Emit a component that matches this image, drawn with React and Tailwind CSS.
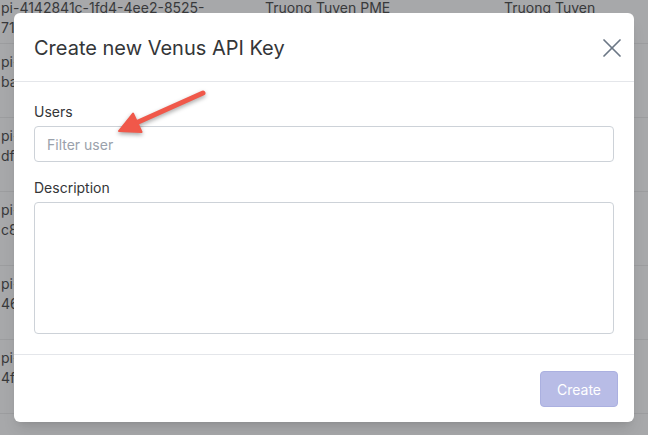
import React from "react";
import { X } from "lucide-react";

// only the slivers left of the modal are visible, keep them short
const rows = [
  { a: "pi-4142841c-1fd4-4ee2-8525-", b: "71f", user: "Truong Tuyen PME", owner: "Truong Tuyen" },
  { a: "pi-", b: "ba0", user: "", owner: "" },
  { a: "pi-", b: "df5", user: "", owner: "" },
  { a: "pi-", b: "c8b", user: "", owner: "" },
  { a: "pi-", b: "461", user: "", owner: "" },
  { a: "pi-", b: "4f9", user: "", owner: "" },
];

const Arrow = () => (
  <svg
    className="absolute left-0 top-0 pointer-events-none"
    width="648"
    height="435"
    style={{ filter: "drop-shadow(0px 2px 2px rgba(0,0,0,0.35))" }}
  >
    <line x1="203" y1="93" x2="136" y2="123" stroke="#f0584a" strokeWidth="5" strokeLinecap="round" />
    <polygon points="119,131 133,113.5 141.5,132" fill="#f0584a" stroke="#f0584a" strokeWidth="2" strokeLinejoin="round" />
  </svg>
);

export default function App() {
  return (
    <div
      className="relative w-[648px] h-[435px] overflow-hidden bg-[#a7a8aa] text-[14px] text-[#38393b]"
      style={{ fontFamily: "Inter, 'Noto Sans', sans-serif" }}
    >
      {/* table behind the dimmed backdrop */}
      <div className="flex flex-col">
        {rows.map((r, i) => (
          <div
            key={i}
            className={`flex border-b border-[#9c9d9f] ${i === 0 ? "h-[46px] -mt-[2px]" : "h-[74px] pt-2"}`}
          >
            <div className="w-[265px] pl-px leading-5">
              <div className="whitespace-nowrap">{r.a}</div>
              <div className="whitespace-nowrap">{r.b}</div>
            </div>
            <div className="w-[239px] leading-5 whitespace-nowrap">{r.user}</div>
            <div className="leading-5 whitespace-nowrap">{r.owner}</div>
          </div>
        ))}
      </div>

      {/* modal */}
      <div className="absolute left-[14px] top-[13px] w-[620px] h-[409px] bg-white rounded-md shadow-lg flex flex-col">
        <div className="h-[69px] flex items-center justify-between pl-5 pr-[6px] border-b border-[#e4e6ea]">
          <h2 className="text-[20px] text-[#343638] font-normal pt-px">Create new Venus API Key</h2>
          <button className="text-[#6b7785] mt-[2px]">
            <X size={32} strokeWidth={1.3} />
          </button>
        </div>

        <div className="px-5 pt-5 pb-5 border-b border-[#e4e6ea]">
          <label className="block text-[14px] leading-5 text-[#343638] mb-1">Users</label>
          <input
            className="block w-full h-9 px-3 text-[14px] border border-[#cdd2d8] rounded bg-white placeholder:text-[#9aa1ab] outline-none"
            placeholder="Filter user"
          />
          <label className="block text-[14px] leading-5 text-[#343638] mt-4 mb-1">Description</label>
          <textarea className="block w-full h-[132px] px-3 py-2 text-[14px] border border-[#cdd2d8] rounded resize-none outline-none" />
        </div>

        <div className="flex-1 flex items-start justify-end pt-4 pr-4">
          <button
            disabled
            className="h-9 px-4 rounded bg-[#b8bce6] border border-[#abb0e0] text-white text-[14px]"
          >
            Create
          </button>
        </div>
      </div>

      <Arrow />
    </div>
  );
}
